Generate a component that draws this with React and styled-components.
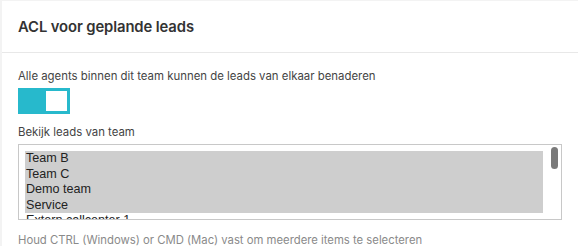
import React from "react";
import styled, { createGlobalStyle } from "styled-components";

const Global = createGlobalStyle`
  html, body { margin: 0; padding: 0; background: #f3f3f3; }
  body { font-family: Inter, "Noto Sans", sans-serif; -webkit-font-smoothing: antialiased; }
`;

const Card = styled.div`
  margin: 1px 0 0 2px;
  background: #fff;
  min-height: 245px;
`;

const Header = styled.div`
  display: flex;
  align-items: center;
  padding-left: 16px;
  border-bottom: 1px solid #e8e8e8;
  box-sizing: border-box;
  height: 52px;
`;

const Title = styled.h2`
  margin: 0;
  font-size: 14.8px;
  font-weight: 600;
  color: #333;
  letter-spacing: -0.1px;
`;

const Body = styled.div`
  padding: 15px 16px 0 16px;
  display: flex;
  flex-direction: column;
`;

const Label = styled.div`
  font-size: 11.4px;
  line-height: 16px;
  color: #444;
  margin-bottom: ${(p) => p.$mb || 0}px;
`;

const Toggle = styled.div`
  width: 52px;
  height: 26px;
  box-sizing: border-box;
  border: 3px solid #27b9cc;
  background: #27b9cc;
  display: flex;
  justify-content: flex-end;
  margin-bottom: 10px;
`;

const Knob = styled.div`
  width: 21px;
  height: 20px;
  background: #fff;
`;

const ListBox = styled.div`
  position: relative;
  width: 544px;
  height: 76px;
  box-sizing: border-box;
  border: 1px solid #c8c8c8;
  overflow: hidden;
  padding: 6px 18px 0 6px;
  margin-top: 4px;
`;

const Option = styled.div`
  font-family: "Liberation Sans", Arial, sans-serif;
  font-size: 12.6px;
  line-height: 15.5px;
  color: #222;
  padding-left: 1px;
  white-space: nowrap;
  background: ${(p) => (p.$selected ? "#cecece" : "transparent")};
`;

const Thumb = styled.div`
  position: absolute;
  right: 3px;
  top: 2px;
  width: 7px;
  height: 22px;
  border-radius: 4px;
  background: #7a7a7a;
`;

const Help = styled.div`
  font-size: 11.3px;
  line-height: 14px;
  color: #8a8a8a;
  margin-top: 13px;
`;

const options = [
  { name: "Team B", selected: true },
  { name: "Team C", selected: true },
  { name: "Demo team", selected: true },
  { name: "Service", selected: true },
  { name: "Extern callcenter 1", selected: false },
];

export default function App() {
  return (
    <>
      <Global />
      <Card>
        <Header>
          <Title>ACL voor geplande leads</Title>
        </Header>
        <Body>
          <Label $mb={4}>Alle agents binnen dit team kunnen de leads van elkaar benaderen</Label>
          <Toggle>
            <Knob />
          </Toggle>
          <Label $mb={0}>Bekijk leads van team</Label>
          <ListBox>
            {options.map((o) => (
              <Option key={o.name} $selected={o.selected}>
                {o.name}
              </Option>
            ))}
            <Thumb />
          </ListBox>
          <Help>Houd CTRL (Windows) or CMD (Mac) vast om meerdere items te selecteren</Help>
        </Body>
      </Card>
    </>
  );
}
